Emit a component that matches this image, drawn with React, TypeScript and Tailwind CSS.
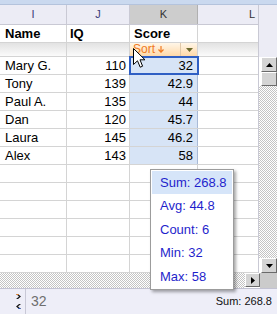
import React from 'react';

const rows = [
  { name: 'Mary G.', iq: 110, score: '32' },
  { name: 'Tony', iq: 139, score: '42.9' },
  { name: 'Paul A.', iq: 135, score: '44' },
  { name: 'Dan', iq: 120, score: '45.7' },
  { name: 'Laura', iq: 145, score: '46.2' },
  { name: 'Alex', iq: 143, score: '58' },
];

const stats = ['Sum: 268.8', 'Avg: 44.8', 'Count: 6', 'Min: 32', 'Max: 58'];

const hatch =
  'bg-[image:repeating-conic-gradient(#c4c4c4_0%_25%,#ffffff_0%_50%)] bg-[length:2px_2px]';

const ScrollButton: React.FC<{ dir: 'up' | 'down' | 'right' | 'none'; className?: string }> = ({ dir, className }) => (
  <div
    className={`flex items-center justify-center bg-[#d4d4d4] border-t border-l border-t-white border-l-white border-r border-b border-r-[#6a6a6a] border-b-[#6a6a6a] ${className ?? ''}`}
  >
    {dir === 'up' && (
      <svg width="7" height="4" viewBox="0 0 7 4"><path d="M3.5 0 L7 4 L0 4 Z" fill="#000" /></svg>
    )}
    {dir === 'down' && (
      <svg width="7" height="4" viewBox="0 0 7 4"><path d="M0 0 L7 0 L3.5 4 Z" fill="#000" /></svg>
    )}
    {dir === 'right' && (
      <svg width="4" height="7" viewBox="0 0 4 7"><path d="M0 0 L4 3.5 L0 7 Z" fill="#000" /></svg>
    )}
  </div>
);

export default function App() {
  const empty = Array.from({ length: 6 });

  return (
    <div className="relative w-[277px] h-[314px] overflow-hidden bg-white font-['Liberation_Sans',Arial,sans-serif] text-[13px] text-black select-none">
      <div className="h-[5px] bg-[#cad9ef] border-b border-[#b4c3dc]" />

      <div className="flex h-[268px]">
        {/* sheet */}
        <div className="w-[258px] flex flex-col">
          {/* column letters */}
          <div className="flex h-[20px] bg-[#ececf5] border-b border-[#c9c9d4] text-[11px]">
            <div className="w-[67px] flex items-center justify-center border-r border-[#c9c9d4] text-[#3c3c7a]">I</div>
            <div className="w-[63px] flex items-center justify-center border-r border-[#c9c9d4] text-[#3c3c7a]">J</div>
            <div className="w-[68px] flex items-center justify-center border-r border-[#b0b0b0] bg-[#cdcdcd] text-[#333]">K</div>
            <div className="flex-1 flex items-center justify-end pr-[3px] text-[#333]">L</div>
          </div>

          {/* headings */}
          <div className="flex h-[18px] border-b border-[#d4d4d4] font-bold">
            <div className="w-[67px] pl-[5px] flex items-center border-r border-[#d4d4d4]">Name</div>
            <div className="w-[63px] pl-[3px] flex items-center border-r border-[#d4d4d4]">IQ</div>
            <div className="w-[68px] pl-[4px] flex items-center border-r border-[#d4d4d4]">Score</div>
            <div className="flex-1" />
          </div>

          {/* filter row */}
          <div className="flex h-[14px] border-b border-[#d4d4d4] bg-gradient-to-b from-[#e2e2e2] to-[#fbfbfb]">
            <div className="w-[67px] border-r border-[#d4d4d4]" />
            <div className="w-[63px] border-r border-[#d4d4d4]" />
            <div className="w-[68px] flex border-r border-[#d4d4d4] bg-gradient-to-b from-[#fff6e8] to-[#ffd9a8]">
              <div className="w-[51px] pl-[3px] flex items-center gap-[3px] border-r border-[#e0c8a8] text-[12px] leading-[13px] text-[#f07a22]">
                <span>Sort</span>
                <svg width="6" height="7" viewBox="0 0 6 7">
                  <path d="M3 0 L3 6 M0.5 3.5 L3 6.2 L5.5 3.5" fill="none" stroke="#f07a22" strokeWidth="1.2" />
                </svg>
              </div>
              <div className="flex-1 flex items-center justify-center">
                <svg width="7" height="4" viewBox="0 0 7 4"><path d="M0 0 L7 0 L3.5 4 Z" fill="#6c6a2c" /></svg>
              </div>
            </div>
            <div className="flex-1" />
          </div>

          {/* data */}
          {rows.map((r, i) => (
            <div key={r.name} className="flex h-[18px] border-b border-[#d4d4d4]">
              <div className="w-[67px] pl-[5px] flex items-center border-r border-[#d4d4d4]">{r.name}</div>
              <div className="w-[63px] pr-[3px] flex items-center justify-end border-r border-[#d4d4d4]">{r.iq}</div>
              <div
                className={`w-[68px] pr-[4px] flex items-center justify-end border-r border-[#a9bad6] ${
                  i === 0 ? 'bg-[#d7e4f6] outline-2 outline-[#2f5fc4] -outline-offset-1' : 'bg-[#d7e4f6]'
                }`}
              >
                {r.score}
              </div>
              <div className="flex-1" />
            </div>
          ))}
          {empty.map((_, i) => (
            <div key={i} className="flex h-[18px] border-b border-[#d4d4d4]">
              <div className="w-[67px] border-r border-[#d4d4d4]" />
              <div className="w-[63px] border-r border-[#d4d4d4]" />
              <div className="w-[68px] border-r border-[#d4d4d4]" />
              <div className="flex-1" />
            </div>
          ))}
        </div>

        {/* vertical scrollbar */}
        <div className="w-[19px] flex flex-col border-l border-[#c9c9d4]">
          <div className="h-[52px] bg-[#ececf5]" />
          <ScrollButton dir="up" className="h-[15px] ml-[2px]" />
          <ScrollButton dir="none" className="h-[14px] ml-[2px]" />
          <div className={`flex-1 ${hatch}`} />
          <ScrollButton dir="down" className="h-[15px] ml-[2px]" />
        </div>
      </div>

      {/* horizontal scrollbar */}
      <div className="flex h-[15px]">
        <div className={`flex-1 ${hatch}`} />
        <ScrollButton dir="right" className="w-[15px] h-[14px]" />
        <div className="w-[17px] bg-[#cbcbcb]" />
      </div>

      {/* status bar */}
      <div className="flex h-[26px] bg-[#eeeef8] border-t border-[#c2c2d2]">
        <div className="w-[26px] flex flex-col items-end justify-center gap-[5px] pr-[4px] border-r border-[#c8c8d6]">
          <svg width="5" height="5" viewBox="0 0 5 5">
            <path d="M0 0 L2 0 L5 2.5 L2 5 L0 5 L3 2.5 Z" fill="#1a1a1a" />
            <path d="M0 0 L2 0 L3 1 L1 1 Z" fill="#f08020" />
          </svg>
          <svg width="5" height="5" viewBox="0 0 5 5">
            <path d="M5 0 L3 0 L0 2.5 L3 5 L5 5 L2 2.5 Z" fill="#1a1a1a" />
            <path d="M5 5 L3 5 L2 4 L4 4 Z" fill="#2050c0" />
          </svg>
        </div>
        <div className="pl-[5px] flex items-center text-[14px] text-[#6e6e6e]">32</div>
        <div className="flex-1 flex items-center justify-end pr-[5px] text-[11px] text-[#111]">Sum: 268.8</div>
      </div>

      {/* aggregate menu */}
      <div className="absolute left-[150px] top-[169px] w-[84px] h-[121px] bg-white border border-[#9c9c9c] shadow-[2px_2px_3px_rgba(0,0,0,0.35)] p-px flex flex-col">
        {stats.map((s, i) => (
          <div
            key={s}
            className={`h-[23.6px] flex items-center pl-[8px] text-[#1f1fcc] ${i === 0 ? 'bg-[#d6e5f9]' : ''}`}
          >
            {s}
          </div>
        ))}
      </div>

      {/* mouse pointer */}
      <svg className="absolute left-[133px] top-[48px]" width="13" height="21" viewBox="0 0 13 21">
        <path
          d="M0.5 0.5 L0.5 16.5 L4.5 12.8 L7.2 19.2 L9.6 18.2 L7 11.8 L12 11.8 Z"
          fill="#fff"
          stroke="#000"
          strokeWidth="1"
          strokeLinejoin="round"
        />
      </svg>
    </div>
  );
}
